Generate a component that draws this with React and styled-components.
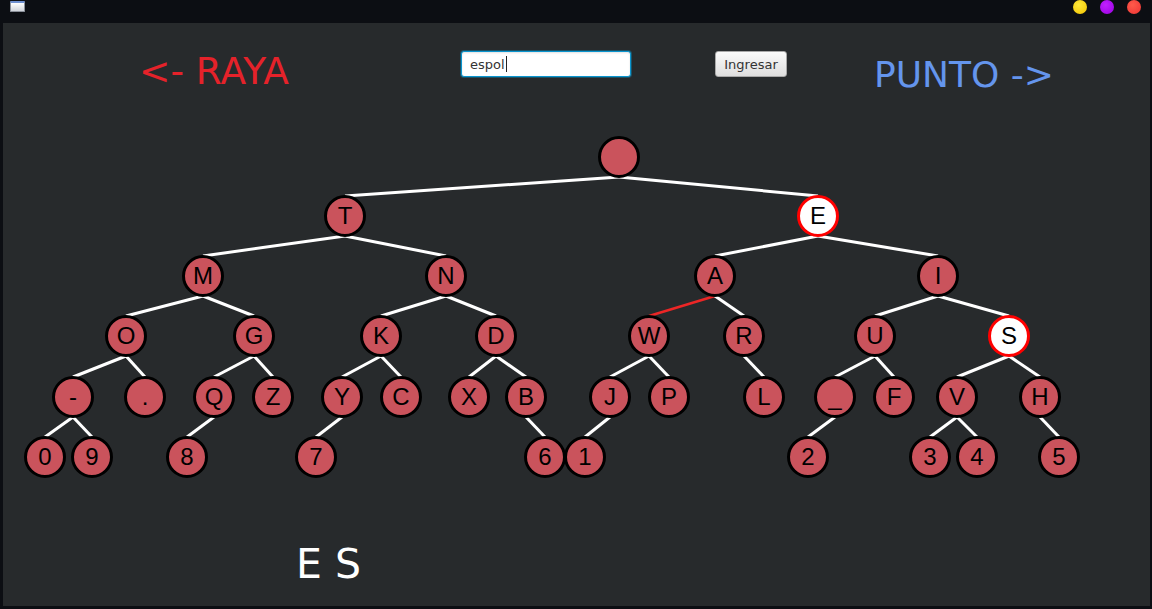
import React from 'react';
import styled, { createGlobalStyle } from 'styled-components';

const GlobalStyle = createGlobalStyle`
  html, body {
    margin: 0;
    padding: 0;
    background: #0c0e13;
    overflow: hidden;
  }
`;

// ---------- tree data (centres in page pixels) ----------
const NODES = {
  root: { x: 619, y: 157, label: '' },
  T: { x: 345, y: 216 }, E: { x: 818, y: 216, hot: true },
  M: { x: 203, y: 276 }, N: { x: 446, y: 276 }, A: { x: 715, y: 276 }, I: { x: 938, y: 276 },
  O: { x: 126, y: 336 }, G: { x: 254, y: 336 }, K: { x: 381, y: 336 }, D: { x: 496, y: 336 },
  W: { x: 649, y: 336 }, R: { x: 744, y: 336 }, U: { x: 875, y: 336 }, S: { x: 1009, y: 336, hot: true },
  dash: { x: 73, y: 397, label: '-' }, dot: { x: 145, y: 397, label: '.' },
  Q: { x: 214, y: 397 }, Z: { x: 273, y: 397 }, Y: { x: 342, y: 397 }, C: { x: 401, y: 397 },
  X: { x: 469, y: 397 }, B: { x: 526, y: 397 }, J: { x: 610, y: 397 }, P: { x: 669, y: 397 },
  L: { x: 764, y: 397 }, under: { x: 835, y: 397, label: '_' }, F: { x: 894, y: 397 },
  V: { x: 957, y: 397 }, H: { x: 1040, y: 397 },
  n0: { x: 45, y: 457, label: '0' }, n9: { x: 92, y: 457, label: '9' }, n8: { x: 187, y: 457, label: '8' },
  n7: { x: 316, y: 457, label: '7' }, n6: { x: 545, y: 457, label: '6' }, n1: { x: 585, y: 457, label: '1' },
  n2: { x: 808, y: 457, label: '2' }, n3: { x: 930, y: 457, label: '3' }, n4: { x: 977, y: 457, label: '4' },
  n5: { x: 1059, y: 457, label: '5' },
};

const EDGES = [
  ['root', 'T'], ['root', 'E'],
  ['T', 'M'], ['T', 'N'], ['E', 'A'], ['E', 'I'],
  ['M', 'O'], ['M', 'G'], ['N', 'K'], ['N', 'D'], ['A', 'W', true], ['A', 'R'], ['I', 'U'], ['I', 'S'],
  ['O', 'dash'], ['O', 'dot'], ['G', 'Q'], ['G', 'Z'], ['K', 'Y'], ['K', 'C'], ['D', 'X'], ['D', 'B'],
  ['W', 'J'], ['W', 'P'], ['R', 'L'], ['U', 'under'], ['U', 'F'], ['S', 'V'], ['S', 'H'],
  ['dash', 'n0'], ['dash', 'n9'], ['Q', 'n8'], ['Y', 'n7'], ['B', 'n6'], ['J', 'n1'],
  ['under', 'n2'], ['V', 'n3'], ['V', 'n4'], ['H', 'n5'],
];

// canvas origin in page pixels
const OX = 3;
const OY = 123;
const R = 20;

// ---------- frame ----------
const Screen = styled.div`
  width: 1152px;
  height: 609px;
  display: flex;
  flex-direction: column;
  background: #0c0e13;
`;

const TitleBar = styled.div`
  height: 23px;
  flex: none;
  display: flex;
  align-items: flex-start;
  justify-content: space-between;
  padding: 0 11px 0 10px;
  box-sizing: border-box;
`;

const AppIcon = styled.div`
  width: 15px;
  height: 11px;
  margin-top: 1px;
  border: 1px solid #8a8f99;
  border-top: 2px solid #6d8fd0;
  border-radius: 1px;
  background: linear-gradient(#ffffff, #cfd3da);
  box-sizing: border-box;
`;

const Dots = styled.div`
  display: flex;
  gap: 13px;
`;

const Dot = styled.span`
  width: 14px;
  height: 14px;
  border-radius: 50%;
  background: ${p => p.color};
`;

const Middle = styled.div`
  flex: 1;
  display: flex;
  padding: 0 2px 3px 3px;
`;

const Window = styled.div`
  flex: 1;
  background: #272a2c;
  display: flex;
  flex-direction: column;
  font-family: 'DejaVu Sans', sans-serif;
`;

// ---------- header ----------
const Header = styled.div`
  height: 100px;
  flex: none;
  display: grid;
  grid-template-columns: 322px 254px 159px auto;
  align-items: start;
  padding: 28px 0 0 136px;
  box-sizing: border-box;
`;

const BigLabel = styled.div`
  font-size: ${p => p.size}px;
  line-height: 36px;
  color: ${p => p.color};
  margin-top: ${p => p.offset}px;
  white-space: nowrap;
`;

const Field = styled.div`
  width: 170px;
  height: 26px;
  box-sizing: border-box;
  background: #fff;
  border: 1px solid #0a95cf;
  border-radius: 3px;
  box-shadow: 0 0 0 1px rgba(3, 158, 211, 0.35), inset 0 1px 2px rgba(0, 0, 0, 0.12);
  display: flex;
  align-items: center;
  padding-left: 8px;
  font-size: 13px;
  color: #333;
`;

const Caret = styled.span`
  width: 1px;
  height: 16px;
  background: #222;
  margin-left: 1px;
`;

const Button = styled.div`
  width: 72px;
  height: 26px;
  box-sizing: border-box;
  border: 1px solid #a9a9a9;
  border-radius: 3px;
  background: linear-gradient(#fbfbfb, #dedede);
  display: flex;
  align-items: center;
  justify-content: center;
  font-size: 13px;
  color: #333;
`;

// ---------- tree ----------
const Canvas = styled.div`
  position: relative;
  height: 370px;
  flex: none;
`;

const Wires = styled.svg`
  position: absolute;
  left: 0;
  top: 0;
  width: 100%;
  height: 100%;
`;

const Node = styled.div`
  position: absolute;
  width: 42px;
  height: 42px;
  box-sizing: border-box;
  border-radius: 50%;
  border: 3px solid ${p => (p.$hot ? '#ff0000' : '#000')};
  background: ${p => (p.$hot ? '#ffffff' : '#ca535c')};
  display: flex;
  align-items: center;
  justify-content: center;
  font-family: 'Liberation Sans', Arial, sans-serif;
  font-size: 24px;
  line-height: 36px;
  color: #000;
`;

// ---------- footer ----------
const Decoded = styled.div`
  padding-left: 293px;
  margin-top: 51px;
  font-size: 41px;
  line-height: 41px;
  color: #fff;
  white-space: pre;
`;

export default function App() {
  return (
    <>
      <GlobalStyle />
      <Screen>
        <TitleBar>
          <AppIcon />
          <Dots>
            <Dot color="radial-gradient(circle at 40% 35%, #ffe83a, #f2c300)" />
            <Dot color="radial-gradient(circle at 40% 35%, #c020ff, #9a00e0)" />
            <Dot color="radial-gradient(circle at 40% 35%, #ff5a4a, #ee3434)" />
          </Dots>
        </TitleBar>
        <Middle>
          <Window>
            <Header>
              <BigLabel color="#e5222a" size={37.5} offset={2}>&lt;- RAYA</BigLabel>
              <Field>espol<Caret /></Field>
              <Button>Ingresar</Button>
              <BigLabel color="#6495ed" size={36} offset={6}>PUNTO -&gt;</BigLabel>
            </Header>

            <Canvas>
              <Wires>
                {EDGES.map(([a, b, red]) => {
                  const p = NODES[a];
                  const c = NODES[b];
                  return (
                    <line
                      key={a + b}
                      x1={p.x - OX}
                      y1={p.y - OY + R}
                      x2={c.x - OX}
                      y2={c.y - OY - R}
                      stroke={red ? '#ec2626' : '#ffffff'}
                      strokeWidth={red ? 2.5 : 3}
                    />
                  );
                })}
              </Wires>
              {Object.entries(NODES).map(([key, n]) => (
                <Node
                  key={key}
                  $hot={n.hot}
                  style={{ left: n.x - OX - 21, top: n.y - OY - 21 }}
                >
                  {n.label !== undefined ? n.label : key}
                </Node>
              ))}
            </Canvas>

            <Decoded>E S</Decoded>
          </Window>
        </Middle>
      </Screen>
    </>
  );
}
